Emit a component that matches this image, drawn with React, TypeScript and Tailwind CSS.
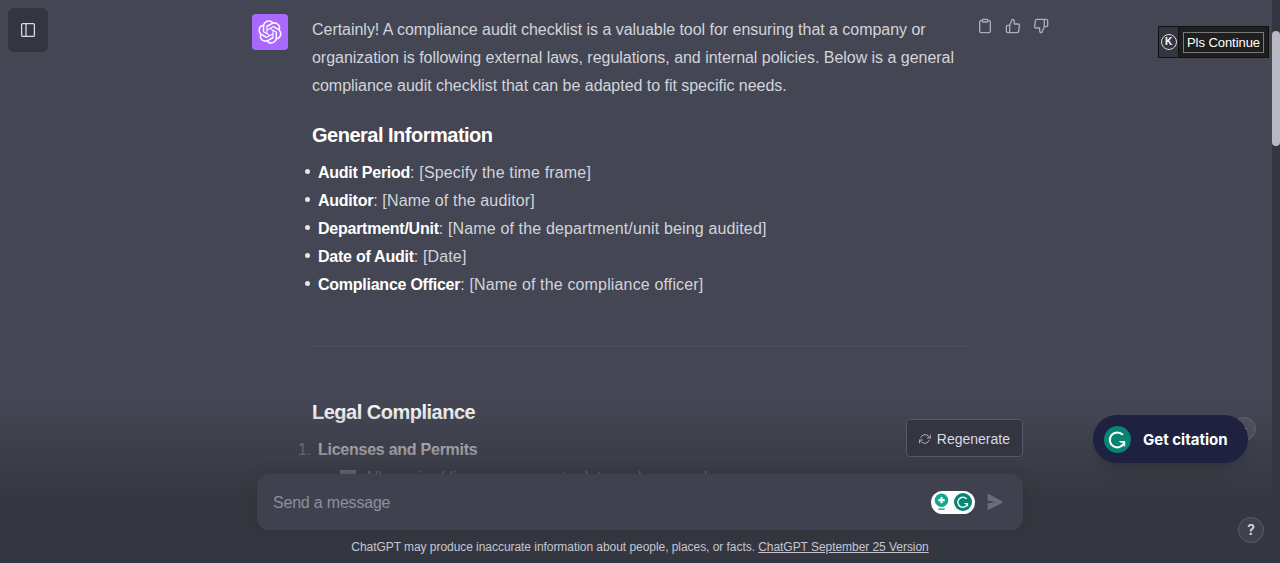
import { FiClipboard, FiRefreshCw, FiThumbsDown, FiThumbsUp } from "react-icons/fi";

const BODY_FONT = { fontFamily: "'Liberation Sans', Arial, sans-serif" };
const WIDGET_FONT = { fontFamily: "Inter, 'Liberation Sans', sans-serif" };

const generalItems = [
  { label: "Audit Period", value: "[Specify the time frame]" },
  { label: "Auditor", value: "[Name of the auditor]" },
  { label: "Department/Unit", value: "[Name of the department/unit being audited]" },
  { label: "Date of Audit", value: "[Date]" },
  { label: "Compliance Officer", value: "[Name of the compliance officer]" },
];

function OpenAiLogo() {
  return (
    <svg viewBox="0 0 41 41" className="h-6 w-6" fill="currentColor">
      <path d="M37.5324 16.8707C37.9808 15.5241 38.1363 14.0974 37.9886 12.6859C37.8409 11.2744 37.3934 9.91076 36.676 8.68622C35.6126 6.83404 33.9882 5.3676 32.0373 4.4985C30.0864 3.62941 27.9098 3.40259 25.8215 3.85078C24.8796 2.7893 23.7219 1.94125 22.4257 1.36341C21.1295 0.785575 19.7249 0.491269 18.3058 0.500197C16.1708 0.495044 14.0893 1.16803 12.3614 2.42214C10.6335 3.67624 9.34853 5.44666 8.6917 7.47815C7.30085 7.76286 5.98686 8.3414 4.8377 9.17505C3.68854 10.0087 2.73073 11.0782 2.02839 12.312C0.956464 14.1591 0.498905 16.2988 0.721698 18.4228C0.944492 20.5467 1.83612 22.5449 3.268 24.1293C2.81966 25.4759 2.66413 26.9026 2.81182 28.3141C2.95951 29.7256 3.40701 31.0892 4.12437 32.3138C5.18791 34.1659 6.8123 35.6322 8.76321 36.5013C10.7141 37.3704 12.8907 37.5973 14.9789 37.1492C15.9208 38.2107 17.0786 39.0587 18.3747 39.6366C19.6709 40.2144 21.0755 40.5087 22.4946 40.4998C24.6307 40.5054 26.7133 39.8321 28.4418 38.5772C30.1704 37.3223 31.4556 35.5506 32.1119 33.5179C33.5027 33.2332 34.8167 32.6547 35.9659 31.821C37.115 30.9874 38.0728 29.9178 38.7752 28.684C39.8458 26.8371 40.3023 24.6979 40.0789 22.5748C39.8556 20.4517 38.9639 18.4544 37.5324 16.8707ZM22.4978 37.8849C20.7443 37.8874 19.0459 37.2733 17.6994 36.1501C17.7601 36.117 17.8666 36.0586 17.936 36.0161L25.9004 31.4156C26.1003 31.3019 26.2663 31.137 26.3813 30.9378C26.4964 30.7386 26.5563 30.5124 26.5549 30.2825V19.0542L29.9213 20.998C29.9389 21.0068 29.9541 21.0198 29.9656 21.0359C29.977 21.052 29.9842 21.0707 29.9867 21.0902V30.3889C29.9842 32.375 29.1946 34.2791 27.7909 35.6841C26.3872 37.0892 24.4838 37.8806 22.4978 37.8849ZM6.39227 31.0064C5.51397 29.4888 5.19742 27.7107 5.49804 25.9832C5.55718 26.0187 5.66048 26.0818 5.73461 26.1244L13.699 30.7248C13.8975 30.8408 14.1233 30.902 14.3532 30.902C14.583 30.902 14.8088 30.8408 15.0073 30.7248L24.731 25.1103V28.9979C24.7321 29.0177 24.7283 29.0376 24.7199 29.0556C24.7115 29.0736 24.6988 29.0893 24.6829 29.1012L16.6317 33.7497C14.9096 34.7416 12.8643 35.0097 10.9447 34.4954C9.02506 33.9811 7.38785 32.7263 6.39227 31.0064ZM4.29707 13.6194C5.17156 12.0998 6.55279 10.9364 8.19885 10.3327C8.19885 10.4013 8.19491 10.5228 8.19491 10.6071V19.808C8.19351 20.0378 8.25334 20.2638 8.36823 20.4629C8.48312 20.6619 8.64893 20.8267 8.84863 20.9404L18.5723 26.5542L15.206 28.4979C15.1894 28.5089 15.1703 28.5155 15.1505 28.5173C15.1307 28.5191 15.1107 28.516 15.0924 28.5082L7.04046 23.8557C5.32135 22.8601 4.06716 21.2235 3.55289 19.3046C3.03862 17.3858 3.30624 15.3413 4.29707 13.6194ZM31.955 20.0556L22.2312 14.4411L25.5976 12.4981C25.6142 12.4872 25.6333 12.4805 25.6531 12.4787C25.6729 12.4769 25.6928 12.4801 25.7111 12.4879L33.7631 17.1364C34.9967 17.849 36.0017 18.8982 36.6606 20.1613C37.3194 21.4244 37.6047 22.849 37.4832 24.2684C37.3617 25.6878 36.8382 27.0432 35.9743 28.1759C35.1103 29.3086 33.9415 30.1717 32.6047 30.6641C32.6047 30.5947 32.6047 30.4733 32.6047 30.3889V21.188C32.6066 20.9586 32.5474 20.7328 32.4332 20.5338C32.319 20.3348 32.154 20.1698 31.955 20.0556ZM35.3055 15.0128C35.2464 14.9765 35.1431 14.9142 35.069 14.8717L27.1045 10.2712C26.906 10.1554 26.6803 10.0943 26.4504 10.0943C26.2206 10.0943 25.9948 10.1554 25.7963 10.2712L16.0726 15.8858V11.9982C16.0715 11.9783 16.0753 11.9585 16.0837 11.9405C16.0921 11.9225 16.1048 11.9068 16.1207 11.8949L24.1719 7.25025C25.4053 6.53903 26.8158 6.19376 28.2383 6.25482C29.6608 6.31589 31.0364 6.78077 32.2044 7.59508C33.3723 8.40939 34.2842 9.53945 34.8334 10.8531C35.3826 12.1667 35.5464 13.6095 35.3055 15.0128ZM14.2424 21.9419L10.8752 19.9981C10.8576 19.9893 10.8423 19.9763 10.8309 19.9602C10.8195 19.9441 10.8122 19.9254 10.8098 19.9058V10.6071C10.8107 9.18295 11.2173 7.78848 11.9819 6.58696C12.7466 5.38544 13.8377 4.42659 15.1275 3.82264C16.4173 3.21869 17.8524 2.99464 19.2649 3.1767C20.6775 3.35876 22.0089 3.93941 23.1034 4.85067C23.0427 4.88379 22.937 4.94215 22.8668 4.98473L14.9024 9.58517C14.7025 9.69878 14.5366 9.86356 14.4215 10.0626C14.3065 10.2616 14.2466 10.4877 14.2479 10.7175L14.2424 21.9419ZM16.071 17.9991L20.4018 15.4978L24.7325 17.9975V22.9985L20.4018 25.4983L16.071 22.9985V17.9991Z" />
    </svg>
  );
}

// grammarly "G" ring with the little arrow
function GrammarlyMark({ className }: { className: string }) {
  return (
    <svg viewBox="0 0 26 26" className={className}>
      <circle cx="13" cy="13" r="13" fill="#078572" />
      <path d="M18.2 8.6A7.2 7.2 0 1 0 19.6 15.8" fill="none" stroke="#fff" strokeWidth="2" />
      <path d="M14.2 14.4H20.4V20.2L18.6 18.4V16.2H16.2Z" fill="#fff" />
    </svg>
  );
}

function Message() {
  return (
    <div className="flex pt-[14px] pl-[252px]">
      <div className="mr-6 flex h-9 w-9 shrink-0 items-center justify-center rounded-sm bg-[#ab68ff] text-white">
        <OpenAiLogo />
      </div>
      <div className="w-[656px] shrink-0 pt-0.5 text-base leading-7 text-[#d1d5db]">
        <p className="tracking-[-0.03px]">
          Certainly! A compliance audit checklist is a valuable tool for ensuring that a company or organization is
          following external laws, regulations, and internal policies. Below is a general compliance audit checklist
          that can be adapted to fit specific needs.
        </p>
        <h3 className="mt-[19px] text-xl leading-8 font-bold tracking-[-0.5px] text-white">General Information</h3>
        <ul className="mt-2 pl-1.5 tracking-[0.15px]">
          {generalItems.map((item) => (
            <li
              key={item.label}
              className="relative before:absolute before:top-2.5 before:left-[-13px] before:h-[5px] before:w-[5px] before:rounded-full before:bg-[#e5e7eb]"
            >
              <strong className="font-bold tracking-[-0.25px] text-white">{item.label}</strong>: {item.value}
            </li>
          ))}
        </ul>
        <hr className="mt-[47px] border-t border-[#4d4f5f]" />
        <h3 className="mt-[49px] text-xl leading-8 font-bold tracking-[-0.5px] text-white">Legal Compliance</h3>
        <ol className="mt-2 pl-1.5">
          <li className="relative">
            <span className="absolute left-[-20px] text-[#9a9ba6]">1.</span>
            <strong className="font-bold tracking-[-0.25px] text-white">Licenses and Permits</strong>
            <div className="flex items-center gap-2 pl-[22px]">
              <span className="h-4 w-4 bg-[#d1d5db]" />
              <span>All required licenses are up to date and renewed</span>
            </div>
          </li>
        </ol>
      </div>
      <div className="ml-[9px] flex shrink-0 gap-3 pt-1 text-[#acacbe]">
        <FiClipboard size={16} />
        <FiThumbsUp size={16} />
        <FiThumbsDown size={16} />
      </div>
    </div>
  );
}

function Composer() {
  return (
    <div className="absolute right-0 bottom-0 left-0 h-[161px] bg-gradient-to-b from-[#35374000] to-[#353740] to-[59%] pl-2">
      <div className="mx-auto flex w-[766px] flex-col pt-[17px]">
        <button className="flex h-[38px] w-[117px] items-center gap-1.5 self-end rounded border border-[#565869] bg-[#343541] px-3 pt-px text-sm text-[#d9d9e3]">
          <FiRefreshCw size={14} className="text-[#acacbe]" />
          Regenerate
        </button>
        <div className="mt-[17px] flex h-14 items-center rounded-xl bg-[#40414f] pr-5 pl-4 shadow-[0_0_15px_rgba(0,0,0,0.1)]">
          <span className="flex-1 pt-0.5 text-base tracking-[-0.2px] text-[#8e8ea0]">Send a message</span>
          <div className="flex h-[23px] w-11 items-center justify-between rounded-full bg-white px-[3px]" style={WIDGET_FONT}>
            <svg viewBox="0 0 16 20" className="h-[18px] w-[15px]">
              <circle cx="8" cy="8" r="7.5" fill="#15a78e" />
              <path d="M8 4.5V11.5M4.5 8H11.5" stroke="#fff" strokeWidth="2.4" />
              <path d="M4.5 18H11.5" stroke="#15a78e" strokeWidth="1.6" />
            </svg>
            <GrammarlyMark className="h-[18px] w-[18px]" />
          </div>
          <svg viewBox="0 0 16 16" className="ml-3 h-4 w-4" fill="#6b6c7b">
            <path d="M.5 1.163A1 1 0 0 1 1.97.28l12.868 6.837a1 1 0 0 1 0 1.766L1.969 15.72A1 1 0 0 1 .5 14.836V10.33a1 1 0 0 1 .816-.983L8.5 8 1.316 6.653A1 1 0 0 1 .5 5.67V1.163Z" />
          </svg>
        </div>
        <p className="mt-[9px] text-center text-xs leading-4 tracking-[-0.05px] text-[#c5c5d2]">
          ChatGPT may produce inaccurate information about people, places, or facts.{" "}
          <span className="underline">ChatGPT September 25 Version</span>
        </p>
      </div>
    </div>
  );
}

export default function App() {
  return (
    <div className="flex h-[563px] w-full overflow-hidden bg-[#444654]" style={BODY_FONT}>
      <div className="relative min-w-0 flex-1">
        <Message />
        <Composer />

        {/* sidebar toggle */}
        <button className="absolute top-2 left-2 flex h-11 w-10 items-center justify-center rounded-md bg-[#343541] text-[#d9d9e3]">
          <svg viewBox="0 0 16 16" className="h-4 w-4" fill="none" stroke="currentColor" strokeWidth="1.3">
            <rect x="1.6" y="1.6" width="12.8" height="12.8" rx="1.2" />
            <path d="M6 1.6V14.4" />
          </svg>
        </button>

        {/* prompt extension */}
        <div className="absolute top-[26px] left-[1158px] flex h-8 w-[111px] items-center border border-[#111] bg-[#1f1f1f]">
          <div className="flex h-full w-5 items-center justify-center border-r border-[#111] bg-[#343541]">
            <span className="flex h-4 w-4 items-center justify-center rounded-full border border-[#d9d9e3] text-[10px] leading-none font-bold text-white">
              K
            </span>
          </div>
          <span className="ml-1 w-[81px] border border-[#7a7a7a] py-px text-center text-[13px] leading-[17px] tracking-[-0.05px] whitespace-nowrap text-white">
            Pls Continue
          </span>
        </div>

        {/* grammarly citation pill */}
        <div className="absolute top-[417px] left-[1232px] flex h-6 w-6 items-center justify-end rounded-full border border-[#62636f] bg-[#4e4f5c] pr-2 text-[10px] leading-none text-white">
          ·
        </div>
        <div
          className="absolute top-[415px] left-[1093px] flex h-12 w-[155px] items-center gap-3 rounded-full bg-[#1e2240] pl-[11px] text-[15px] font-bold text-white shadow-lg"
          style={WIDGET_FONT}
        >
          <GrammarlyMark className="h-[27px] w-[27px]" />
          <span className="pt-0.5">Get citation</span>
        </div>

        <div
          className="absolute top-[517px] left-[1238px] flex h-[26px] w-[26px] items-center justify-center rounded-full border border-[#5c5d68] bg-[#40414f] text-sm font-semibold text-[#d9d9e3]"
          style={WIDGET_FONT}
        >
          ?
        </div>
      </div>

      {/* scrollbar */}
      <div className="w-2 shrink-0 bg-[#353640] pt-[31px]">
        <div className="h-[115px] rounded-full bg-[#b9b9c6]" />
      </div>
    </div>
  );
}
